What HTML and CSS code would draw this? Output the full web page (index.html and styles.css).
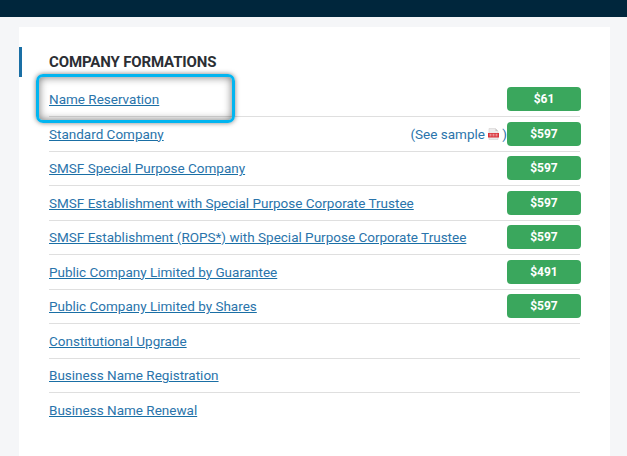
FILE: index.html
```html
<!DOCTYPE html>
<html lang="en">
<head>
<meta charset="utf-8">
<title>Company Formations</title>
<link rel="stylesheet" href="styles.css">
</head>
<body>
<header class="topbar"></header>
<main class="card">
  <h2 class="title">COMPANY FORMATIONS</h2>
  <ul class="list">
    <li class="row"><a href="#">Name Reservation</a><span class="price">$61</span></li>
    <li class="row"><a href="#">Standard Company</a><span class="sample">(See sample<svg class="pdf" width="11" height="12" viewBox="0 0 11 12"><path d="M1 0.5h6.5l2.500 2.500v8.500H1z" fill="#ecebeb" stroke="#d5d2d2" stroke-width=".6"/><path d="M7.500 0.500v2.500h2.500z" fill="#c4c0c0"/><rect x="0" y="5" width="11" height="4.500" fill="#d9333a"/><path d="M1.500 6.300h2M4.500 6.300h2M7.500 6.300h2M1.500 7.800h2M4.500 7.800h2M7.500 7.800h2" stroke="#f6c9cb" stroke-width=".8"/></svg> )</span><span class="price">$597</span></li>
    <li class="row"><a href="#">SMSF Special Purpose Company</a><span class="price">$597</span></li>
    <li class="row"><a href="#">SMSF Establishment with Special Purpose Corporate Trustee</a><span class="price">$597</span></li>
    <li class="row"><a href="#">SMSF Establishment (ROPS*) with Special Purpose Corporate Trustee</a><span class="price">$597</span></li>
    <li class="row"><a href="#">Public Company Limited by Guarantee</a><span class="price">$491</span></li>
    <li class="row"><a href="#">Public Company Limited by Shares</a><span class="price">$597</span></li>
    <li class="row"><a href="#">Constitutional Upgrade</a></li>
    <li class="row"><a href="#">Business Name Registration</a></li>
    <li class="row"><a href="#">Business Name Renewal</a></li>
  </ul>
  <div class="highlight"></div>
</main>
</body>
</html>
```
FILE: styles.css
```css
* { box-sizing: border-box; }
html, body { margin: 0; height: 456px; overflow: hidden; }
body {
  background: #f5f6f8;
  font-family: "Roboto", "Liberation Sans", sans-serif;
}
.topbar { height: 17px; background: #00263c; }
.card {
  position: relative;
  margin: 10px 17px 0 19px;
  height: 429px;
  background: #fff;
  padding: 25px 30px 0 30px;
}
.card::before {
  content: "";
  position: absolute;
  left: 0;
  top: 20px;
  width: 3px;
  height: 30px;
  background: #1a6fa5;
}
.title {
  margin: 0;
  height: 30.5px;
  line-height: 20px;
  font-size: 15px;
  font-weight: 700;
  letter-spacing: -0.13px;
  color: #2b2e34;
}
.list { list-style: none; margin: 0; padding: 0; }
.row {
  display: flex;
  align-items: center;
  height: 34.5px;
  border-bottom: 1px solid #dfdfdf;
  font-size: 13.5px;
  letter-spacing: 0;
}
.row:last-child { border-bottom: 0; }
.row a { color: #2a74ab; text-decoration: underline; text-decoration-color: #1a6fa5; }
.sample {
  margin-left: auto;
  color: #2a74ab;
  font-size: 13.5px;
  display: flex;
  align-items: center;
  white-space: pre;
}
.pdf { margin-left: 3px; }
.price {
  flex: none;
  width: 74px;
  height: 24px;
  margin-right: -1px;
  line-height: 24px;
  text-align: center;
  background: #3aa75d;
  border-radius: 4px;
  color: #fff;
  font-size: 12px;
  font-weight: 700;
}
.row > a + .price { margin-left: auto; }
.highlight {
  position: absolute;
  left: 17px;
  top: 47px;
  width: 199px;
  height: 49px;
  border: 3.5px solid #02b5f0;
  border-radius: 7px;
  box-shadow: 0 0 5px rgba(0,0,0,.5), inset 0 0 8px rgba(0,0,0,.55);
}
```
